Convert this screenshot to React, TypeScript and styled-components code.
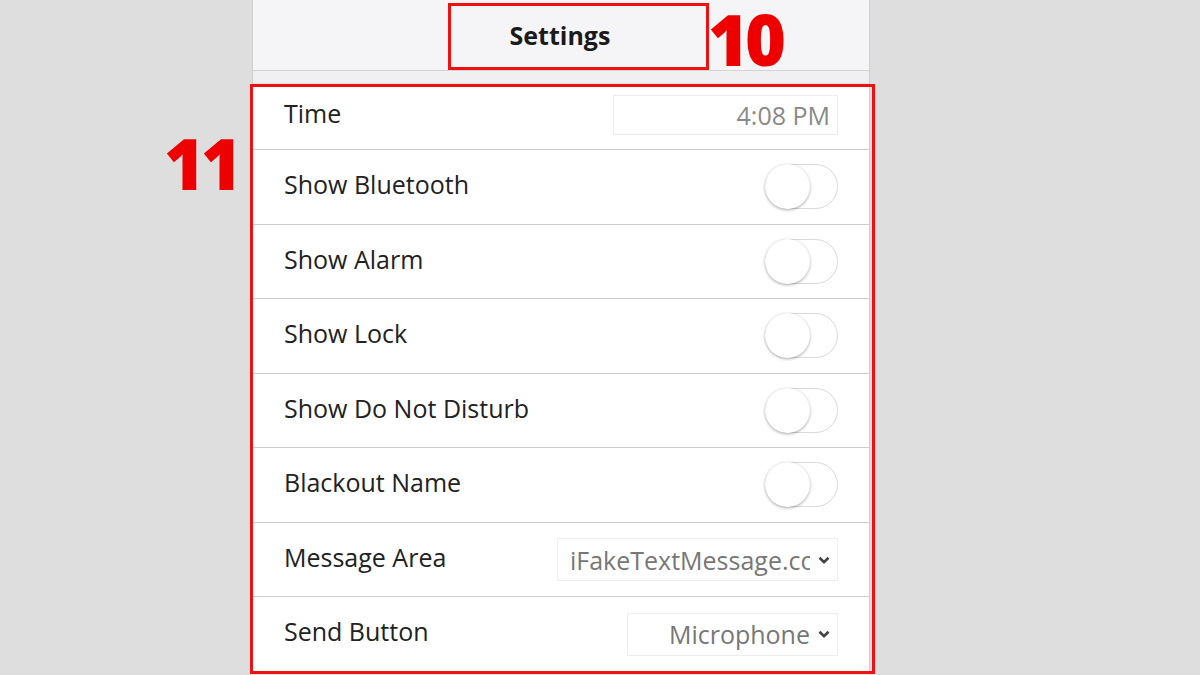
import React from "react";
import styled, { createGlobalStyle } from "styled-components";

const GlobalStyle = createGlobalStyle`
  html, body {
    margin: 0;
    padding: 0;
    background: #dedede;
    font-family: "Open Sans", "Noto Sans", sans-serif;
  }
`;

const rows = [
  { label: "Time", kind: "time", value: "4:08 PM" },
  { label: "Show Bluetooth", kind: "toggle" },
  { label: "Show Alarm", kind: "toggle" },
  { label: "Show Lock", kind: "toggle" },
  { label: "Show Do Not Disturb", kind: "toggle" },
  { label: "Blackout Name", kind: "toggle" },
  { label: "Message Area", kind: "select", value: "iFakeTextMessage.com", width: 281 },
  { label: "Send Button", kind: "select", value: "Microphone", width: 211 },
];

export default function App() {
  return (
    <>
      <GlobalStyle />
      <Page>
        <Panel>
          <Header>
            <Title>Settings</Title>
            <Box style={{ left: 195, top: 3, width: 261, height: 67 }} />
            <Label style={{ left: 455, top: 4 }}>10</Label>
          </Header>
          <Spacer />
          <List>
            {rows.map((r, i) => (
              <Row key={r.label} $first={i === 0}>
                <RowLabel $first={i === 0}>{r.label}</RowLabel>
                {r.kind === "time" && <TimeInput>{r.value}</TimeInput>}
                {r.kind === "toggle" && (
                  <Toggle>
                    <Knob />
                  </Toggle>
                )}
                {r.kind === "select" && (
                  <Select $w={r.width ?? 200}>
                    <SelectText>{r.value}</SelectText>
                    <Chevron viewBox="0 0 10 10">
                      <path d="M1.8 3.4 L5 6.6 L8.2 3.4" fill="none" stroke="#444" strokeWidth="1.9" />
                    </Chevron>
                  </Select>
                )}
              </Row>
            ))}
            <Box style={{ left: -3, top: 0, width: 625, height: 590 }} />
            <Label style={{ left: -89, top: 44 }}>11</Label>
          </List>
        </Panel>
      </Page>
    </>
  );
}

const Page = styled.div`
  width: 1200px;
  height: 675px;
  overflow: hidden;
  padding-left: 252px;
  box-sizing: border-box;
`;

const Panel = styled.div`
  width: 618px;
  box-sizing: border-box;
  background: #f2f2f4;
  border-left: 1px solid #cfcfcf;
  border-right: 1px solid #cfcfcf;
  display: flex;
  flex-direction: column;
`;

const Header = styled.div`
  position: relative;
  height: 70px;
  display: flex;
  align-items: center;
  justify-content: center;
  background: #f5f5f7;
  border-bottom: 1px solid #d4d4d4;
`;

const Title = styled.div`
  font-weight: 700;
  font-size: 25px;
  color: #1a1a1a;
  margin-right: 2px;
`;

const Spacer = styled.div`
  height: 12px;
  background: #f0f0f2;
  border-bottom: 1px solid #e2e2e2;
`;

const List = styled.div`
  position: relative;
  background: #fff;
  padding-top: 2px;
`;

const Row = styled.div<{ $first?: boolean }>`
  height: ${(p) => (p.$first ? "63px" : "73.5px")};
  display: flex;
  align-items: center;
  justify-content: space-between;
  padding: 0 31px 0 31px;
  border-bottom: 1px solid #cdcdcd;
  &:last-child {
    border-bottom: none;
  }
`;

const RowLabel = styled.div<{ $first?: boolean }>`
  font-size: 25px;
  color: #222;
  margin-top: ${(p) => (p.$first ? "-9px" : "-5px")};
`;

const TimeInput = styled.div`
  width: 225px;
  height: 40px;
  box-sizing: border-box;
  border: 1px solid #ececec;
  display: flex;
  align-items: center;
  justify-content: flex-end;
  padding-right: 7px;
  font-size: 25px;
  color: #8a8a8a;
  margin-top: -6px;
`;

const Toggle = styled.div`
  width: 73px;
  height: 45px;
  box-sizing: border-box;
  border: 1px solid #dadada;
  border-radius: 23px;
  background: #fff;
  position: relative;
`;

const Knob = styled.div`
  position: absolute;
  left: -1px;
  top: -1px;
  width: 45px;
  height: 45px;
  border-radius: 50%;
  background: #fff;
  box-shadow: 0 1px 3px rgba(0, 0, 0, 0.35);
`;

const Select = styled.div<{ $w: number }>`
  width: ${(p) => p.$w}px;
  height: 43px;
  box-sizing: border-box;
  border: 1px solid #eeeeee;
  display: flex;
  align-items: center;
  justify-content: flex-end;
  padding: 0 6px 0 12px;
  gap: 7px;
  margin-top: 1px;
`;

const SelectText = styled.div`
  font-size: 25px;
  color: #777;
  white-space: nowrap;
  overflow: hidden;
  text-overflow: clip;
  min-width: 0;
`;

const Chevron = styled.svg`
  width: 14px;
  height: 14px;
  flex-shrink: 0;
`;

const Box = styled.div`
  position: absolute;
  border: 3px solid #ee1111;
  box-sizing: border-box;
  pointer-events: none;
`;

const Label = styled.div`
  position: absolute;
  font-family: "Open Sans", "Noto Sans", sans-serif;
  font-weight: 800;
  font-size: 70px;
  line-height: 1;
  color: #ee0000;
  letter-spacing: -4px;
`;
